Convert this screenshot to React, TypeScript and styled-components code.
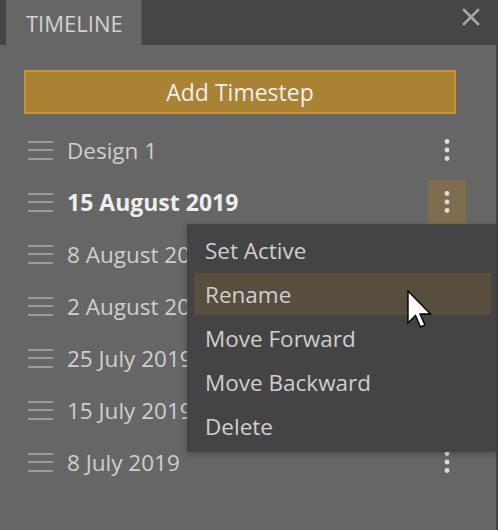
import styled, { createGlobalStyle } from 'styled-components'

const GlobalStyle = createGlobalStyle`
  html, body {
    margin: 0;
    padding: 0;
    background: #444444;
  }
  * {
    box-sizing: border-box;
  }
`

const timesteps = [
  { label: 'Design 1' },
  { label: '15 August 2019', active: true, open: true },
  { label: '8 August 2019' },
  { label: '2 August 2019' },
  { label: '25 July 2019' },
  { label: '15 July 2019' },
  { label: '8 July 2019' },
]

const menuItems = ['Set Active', 'Rename', 'Move Forward', 'Move Backward', 'Delete']

const HamburgerIcon = () => (
  <svg width='25' height='22' viewBox='0 0 25 22'>
    <rect x='0' y='2' width='25' height='2' fill='#9a9a9a' />
    <rect x='0' y='10' width='25' height='2' fill='#9a9a9a' />
    <rect x='0' y='19' width='25' height='2' fill='#9a9a9a' />
  </svg>
)

const KebabIcon = () => (
  <svg width='6' height='24' viewBox='0 0 6 24'>
    <circle cx='3' cy='3.5' r='2.4' fill='#dddddd' />
    <circle cx='3' cy='12' r='2.4' fill='#dddddd' />
    <circle cx='3' cy='20.5' r='2.4' fill='#dddddd' />
  </svg>
)

const CloseIcon = () => (
  <svg width='18' height='18' viewBox='0 0 18 18'>
    <path d='M2 2 L16 16 M16 2 L2 16' stroke='#a8a8a8' strokeWidth='2.6' strokeLinecap='square' />
  </svg>
)

const CursorIcon = () => (
  <svg width='26' height='40' viewBox='0 0 26 40'>
    <path
      d='M1 1 L1 33 L8.5 25.5 L13.5 37 L18 35 L13 24 L23.5 24 Z'
      fill='#ffffff'
      stroke='#000000'
      strokeWidth='1.4'
      strokeLinejoin='miter'
    />
  </svg>
)

const App = () => {
  return (
    <>
      <GlobalStyle />
      <Window>
        <TabBar>
          <Tab>TIMELINE</Tab>
          <CloseButton>
            <CloseIcon />
          </CloseButton>
        </TabBar>
        <Panel>
          <AddButton>Add Timestep</AddButton>
          <List>
            {timesteps.map((step) => (
              <Row key={step.label}>
                <Handle>
                  <HamburgerIcon />
                </Handle>
                <RowLabel $active={!!step.active}>{step.label}</RowLabel>
                <MoreButton $open={!!step.open}>
                  <KebabIcon />
                </MoreButton>
              </Row>
            ))}
            <Menu>
              {menuItems.map((item) => (
                <MenuItem key={item} $hover={item === 'Rename'}>
                  {item}
                </MenuItem>
              ))}
            </Menu>
            <Cursor>
              <CursorIcon />
            </Cursor>
          </List>
        </Panel>
      </Window>
    </>
  )
}

const Window = styled.div`
  display: flex;
  flex-direction: column;
  width: 498px;
  height: 530px;
  font-family: 'Open Sans', 'Noto Sans', sans-serif;
  overflow: hidden;
`

const TabBar = styled.div`
  display: flex;
  align-items: stretch;
  height: 45px;
  padding-left: 6px;
  background: #454545;
`

const Tab = styled.div`
  display: flex;
  align-items: center;
  width: 136px;
  padding-left: 20px;
  background: #666666;
  border-right: 1px solid #5a5a5a;
  color: #d2d2d2;
  font-size: 22px;
`

const CloseButton = styled.div`
  margin-left: auto;
  margin-right: 18px;
  padding-top: 8px;
`

const Panel = styled.div`
  flex: 1;
  display: flex;
  flex-direction: column;
  width: 496px;
  padding: 25px 24px 0 24px;
  background: #666666;
`

const AddButton = styled.div`
  display: flex;
  align-items: center;
  justify-content: center;
  height: 44px;
  width: 432px;
  background: #a98233;
  border: 2px solid #c8902e;
  color: #f0f0f0;
  font-size: 23px;
`

const List = styled.div`
  position: relative;
  display: flex;
  flex-direction: column;
  margin-top: 10px;
`

const Row = styled.div`
  display: flex;
  align-items: center;
  height: 52px;
`

const Handle = styled.div`
  display: flex;
  align-items: center;
  width: 43px;
  padding-left: 4px;
`

const RowLabel = styled.span<{ $active: boolean }>`
  flex: 1;
  white-space: nowrap;
  color: ${(p) => (p.$active ? '#eeeeee' : '#cfcfcf')};
  font-weight: ${(p) => (p.$active ? 700 : 400)};
  font-size: ${(p) => (p.$active ? '23px' : '22.5px')};
`

const MoreButton = styled.div<{ $open: boolean }>`
  display: flex;
  align-items: center;
  justify-content: center;
  width: 38px;
  height: 44px;
  margin-right: 6px;
  background: ${(p) => (p.$open ? '#7f6d50' : 'transparent')};
`

const Menu = styled.div`
  position: absolute;
  left: 163px;
  top: 100px;
  width: 309px;
  display: flex;
  flex-direction: column;
  gap: 2px;
  padding: 5px 5px 5px 7px;
  background: #444444;
  box-shadow: 0 2px 6px rgba(0, 0, 0, 0.25);
`

const MenuItem = styled.div<{ $hover: boolean }>`
  display: flex;
  align-items: center;
  height: 42px;
  padding-left: 11px;
  background: ${(p) => (p.$hover ? '#574e3e' : 'transparent')};
  color: #cfcfcf;
  font-size: 22.5px;
`

const Cursor = styled.div`
  position: absolute;
  left: 383px;
  top: 166px;
  line-height: 0;
`

export default App
